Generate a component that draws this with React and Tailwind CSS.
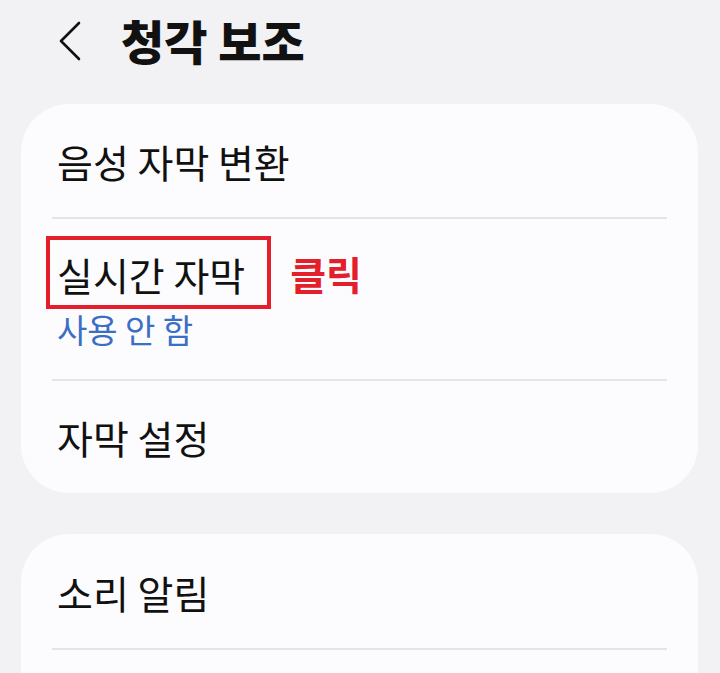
import React from "react";

const font = { fontFamily: '"Noto Sans CJK KR", "Noto Sans", sans-serif' };

function Divider() {
  return <div className="mx-[31px] h-[2px] bg-[#e4e4e7]" />;
}

function Row({ children }) {
  return (
    <div className="flex h-[112px] items-center pl-[36px] text-[39px] leading-[44px] text-[#111111]">
      {children}
    </div>
  );
}

export default function App() {
  return (
    <div className="h-[673px] w-[720px] overflow-hidden bg-[#f2f2f4]" style={font}>
      {/* header */}
      <div className="flex h-[80px] items-center pl-[58px]">
        <svg width="24" height="40" viewBox="0 0 24 40" className="mt-[1px]">
          <path d="M21 2 L3 20 L21 38" fill="none" stroke="#111" strokeWidth="2.6" strokeLinecap="round" strokeLinejoin="round" />
        </svg>
        <h1 className="ml-[39px] text-[47px] font-black leading-[50px] text-[#111111]">청각 보조</h1>
      </div>

      {/* card 1 */}
      <div className="ml-[21px] mr-[22px] mt-[24px] rounded-[48px] bg-[#fcfcfe]">
        <div className="pt-[1px]">
          <Row>음성 자막 변환</Row>
        </div>
        <Divider />
        <div className="pl-[36px] pt-[17px] pb-[31px]">
          <div className="flex items-center">
            <span className="-ml-[11px] border-4 border-[#e41e2b] pl-[7px] pr-[22px] pt-[14px] pb-[11px] text-[39px] leading-[40px] text-[#111111]">
              실시간 자막
            </span>
            <span className="ml-[19px] text-[39px] font-bold leading-[40px] text-[#e41e2b]">클릭</span>
          </div>
          <div className="mt-[1px] text-[33px] leading-[38px] text-[#3b6fc4]">사용 안 함</div>
        </div>
        <Divider />
        <Row>자막 설정</Row>
      </div>

      {/* card 2 */}
      <div className="ml-[21px] mr-[22px] mt-[41px] h-[200px] rounded-[48px] bg-[#fcfcfe]">
        <div className="pt-[2px]">
          <Row>소리 알림</Row>
        </div>
        <Divider />
      </div>
    </div>
  );
}
